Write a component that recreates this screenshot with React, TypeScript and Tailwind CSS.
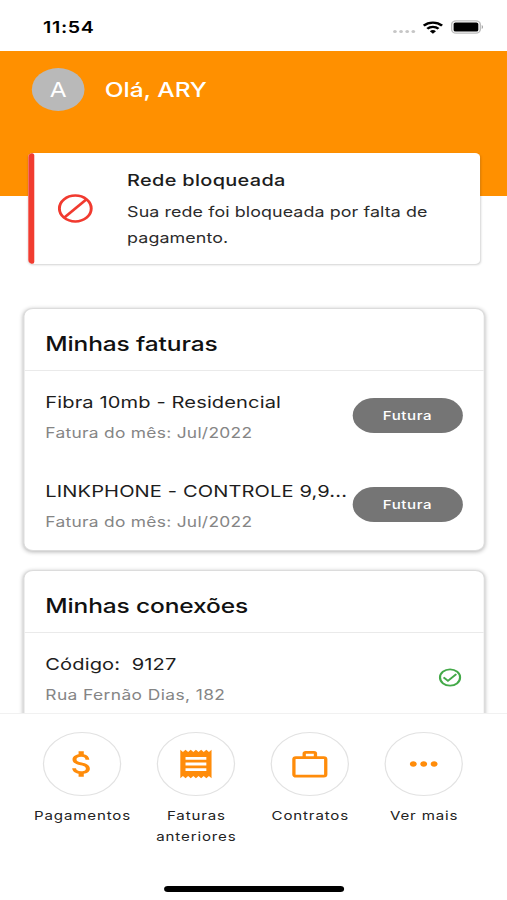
import React from 'react';
import { MdAttachMoney, MdReceipt, MdMoreHoriz } from 'react-icons/md';

const invoices = [
  { id: 1, title: 'Fibra 10mb - Residencial', month: 'Jul/2022', status: 'Futura' },
  { id: 2, title: 'LINKPHONE - CONTROLE 9,9...', month: 'Jul/2022', status: 'Futura' },
];

const BriefcaseIcon: React.FC = () => (
  <svg className="h-[28px] w-[30px]" viewBox="0 0 30 28" fill="none" stroke="currentColor" strokeWidth="2.7">
    <rect x="2" y="7.6" width="26" height="18.6" rx="1.6" />
    <path d="M10.4 7.6V3.6q0-1.2 1.2-1.2h6.8q1.2 0 1.2 1.2v4" />
  </svg>
);

const navItems = [
  { id: 'payments', icon: <MdAttachMoney size={34} />, label: 'Pagamentos' },
  { id: 'invoices', icon: <MdReceipt size={34} />, label: 'Faturas anteriores' },
  { id: 'contracts', icon: <BriefcaseIcon />, label: 'Contratos' },
  { id: 'more', icon: <MdMoreHoriz size={34} />, label: 'Ver mais' },
];

const StatusBar: React.FC = () => (
  <div className="flex h-[51px] shrink-0 items-center justify-between pr-[19.5px] pl-[35.2px] pt-[3px]">
    <span className="text-[16px] font-semibold tracking-[0.5px]">11:54</span>
    <div className="flex items-center">
      <div className="mt-[8px] mr-[5.5px] flex gap-[2px]">
        <span className="size-[3px] rounded-full bg-[#c6c6c6]" />
        <span className="size-[3px] rounded-full bg-[#c6c6c6]" />
        <span className="size-[3px] rounded-full bg-[#c6c6c6]" />
        <span className="size-[3px] rounded-full bg-[#c6c6c6]" />
      </div>
      <svg className="mr-[6px] h-[13px] w-[17px]" viewBox="0 0 17 13" fill="none" stroke="#000" strokeWidth="2.2">
        <path d="M1 4.6a10.8 10.8 0 0 1 15 0" />
        <path d="M3.9 7.7a6.6 6.6 0 0 1 9.2 0" />
        <path d="M8.5 12.8 6 10.3a3.6 3.6 0 0 1 5 0z" fill="#000" stroke="none" />
      </svg>
      <svg className="h-[14px] w-[27px]" viewBox="0 0 27 14">
        <rect x="0.8" y="0.8" width="23.4" height="12.4" rx="3.6" fill="none" stroke="#bdbdbd" strokeWidth="1.2" />
        <rect x="2.4" y="2.4" width="20.2" height="9.2" rx="1.6" fill="#000" />
        <path d="M25.4 5v4c1.3-.6 1.3-3.4 0-4z" fill="#9a9a9a" />
      </svg>
    </div>
  </div>
);

const Header: React.FC = () => (
  <header className="flex h-[145px] shrink-0 items-start bg-[#ff9000] pt-[17px] pl-[26px]">
    <div className="flex size-[43px] items-center justify-center rounded-full bg-[#b9b9b9] text-[20px] text-white">
      A
    </div>
    <h1 className="ml-[16.5px] text-[20px] leading-[45px] font-medium text-white">Olá, ARY</h1>
  </header>
);

const BlockedAlert: React.FC = () => (
  <div className="relative -mt-[43px] mr-[22px] ml-[23px] flex h-[111px] shrink-0 overflow-hidden rounded-[4px] bg-white shadow-[0_1px_2px_rgba(0,0,0,0.18)]">
    <div className="w-[4.5px] shrink-0 rounded-full bg-[#f13c30]" />
    <svg className="mt-[41px] ml-[19px] size-[29px]" viewBox="0 0 29 29" fill="none" stroke="#f13a2f" strokeWidth="2.4">
      <circle cx="14.5" cy="14.5" r="13" />
      <path d="M5.2 23.8 23.8 5.2" />
    </svg>
    <div className="ml-[28.3px] pt-[15px]">
      <h2 className="text-[16.3px] leading-[25px] font-medium tracking-[0.25px] text-[#1d1d1d]">Rede bloqueada</h2>
      <p className="mt-[7px] text-[14.6px] leading-[25.5px] tracking-[0.07px] whitespace-nowrap text-[#2b2b2b]">
        Sua rede foi bloqueada por falta de
        <br />
        pagamento.
      </p>
    </div>
  </div>
);

interface CardProps {
  title: string;
  className: string;
  children: React.ReactNode;
}

const Card: React.FC<CardProps> = ({ title, className, children }) => (
  <section
    className={`mr-[18px] ml-[19px] shrink-0 rounded-[8px] border border-[#dcdcdc] bg-white shadow-[0_1px_4px_rgba(0,0,0,0.3)] ${className}`}
  >
    <h2 className="h-[62px] border-b border-[#eaeaea] pl-[17px] text-[20px] leading-[70px] font-medium tracking-[-0.1px] text-[#111]">
      {title}
    </h2>
    {children}
  </section>
);

const App: React.FC = () => {
  return (
    <div className="h-[900px] w-[507px] overflow-hidden bg-white">
      {/* 414pt wide phone layout stretched to the full window */}
      <div className="flex h-[900px] w-[414px] origin-top-left scale-x-[1.2246] flex-col bg-white font-['Inter','Liberation_Sans',sans-serif] text-black">
        <StatusBar />
        <main className="flex h-[662px] shrink-0 flex-col overflow-hidden">
          <Header />
          <BlockedAlert />

          <Card title="Minhas faturas" className="mt-[44px] h-[243px]">
            {invoices.map((invoice) => (
              <div key={invoice.id} className="flex h-[89px] items-start justify-between pr-[17px] pl-[17px]">
                <div className="pt-[19px]">
                  <p className="text-[16.4px] leading-[25px] tracking-[0.1px] whitespace-nowrap text-[#1d1d1d]">
                    {invoice.title}
                  </p>
                  <p className="mt-[6px] text-[14.2px] leading-[24px] tracking-[0.23px] whitespace-nowrap text-[#858585]">
                    Fatura do mês: {invoice.month}
                  </p>
                </div>
                <span className="mt-[27px] flex h-[35px] w-[90.5px] shrink-0 items-center justify-center rounded-full bg-[#757575] pt-px text-[12.3px] font-medium tracking-[0.5px] text-white">
                  {invoice.status}
                </span>
              </div>
            ))}
          </Card>

          <Card title="Minhas conexões" className="mt-[19px] h-[243px]">
            <div className="flex items-start justify-between pr-[18px] pl-[17px]">
              <div className="pt-[19px]">
                <p className="text-[16.4px] leading-[25px] tracking-[0.1px] whitespace-pre text-[#1d1d1d]">
                  {'Código:  9127'}
                </p>
                <p className="mt-[6px] text-[14.2px] leading-[24px] tracking-[0.33px] text-[#858585]">
                  Rua Fernão Dias, 182
                </p>
              </div>
              <svg className="mt-[35px] size-[19px]" viewBox="0 0 19 19" fill="none" stroke="#43a948" strokeWidth="1.8">
                <circle cx="9.5" cy="9.5" r="8.2" />
                <path d="m4.2 9.3 3.6 3.5 6.8-6.6" />
              </svg>
            </div>
          </Card>
        </main>

        <nav className="flex h-[173px] shrink-0 border-t border-[#f1f1f1] bg-white px-[20.9px] pt-[17.5px]">
          {navItems.map((item) => (
            <button key={item.id} className="flex w-[93px] shrink-0 flex-col items-center">
              <span className="flex size-[64px] items-center justify-center rounded-full border border-[#e2e2e2] text-[#ff8c0a]">
                {item.icon}
              </span>
              <span className="mt-[9px] text-[12.3px] leading-[21px] tracking-[0.7px] text-[#222]">
                {item.label}
              </span>
            </button>
          ))}
        </nav>
        <div className="ml-[134px] h-[6px] w-[147px] shrink-0 rounded-full bg-black" />
      </div>
    </div>
  );
};

export default App;
